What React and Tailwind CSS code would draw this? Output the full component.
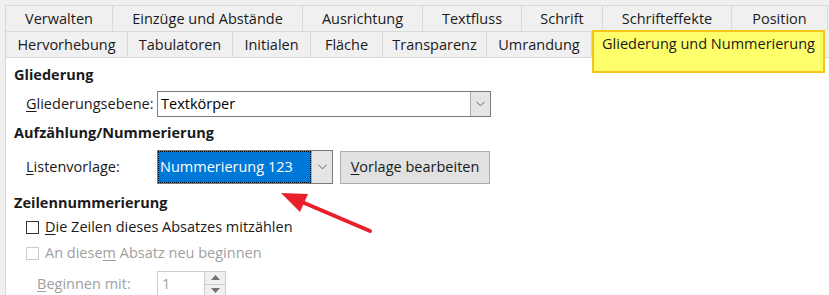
import React from 'react';

const topTabs = [
  { label: 'Verwalten', w: 'w-[108px]' },
  { label: 'Einzüge und Abstände', w: 'w-[190px]' },
  { label: 'Ausrichtung', w: 'w-[120px]' },
  { label: 'Textfluss', w: 'w-[99px]' },
  { label: 'Schrift', w: 'w-[81px]' },
  { label: 'Schrifteffekte', w: 'w-[129px]' },
  { label: 'Position', w: 'w-[96px]' },
];

const bottomTabs = [
  { label: 'Hervorhebung', w: 'w-[123px]' },
  { label: 'Tabulatoren', w: 'w-[105px]' },
  { label: 'Initialen', w: 'w-[78px]' },
  { label: 'Fläche', w: 'w-[72px]' },
  { label: 'Transparenz', w: 'w-[104px]' },
  { label: 'Umrandung', w: 'w-[105px]' },
];

const Chevron = () => (
  <svg width="9" height="6" viewBox="0 0 9 6" fill="none">
    <path d="M0.5 0.8 L4.5 4.8 L8.5 0.8" stroke="#606060" strokeWidth="1" />
  </svg>
);

const Tri = ({ up }) => (
  <svg width="9" height="5" viewBox="0 0 9 5">
    <polygon points={up ? '0,5 9,5 4.5,0' : '0,0 9,0 4.5,5'} fill="#707070" />
  </svg>
);

const Tab = ({ label, w, first }) => (
  <div
    className={`${w} h-full flex items-center justify-center border-t border-r border-[#d9d9d9] ${first ? 'border-l' : ''}`}
  >
    {label}
  </div>
);

const Heading = ({ children, className = '' }) => (
  <div className={`h-[20px] flex items-center font-bold ${className}`}>{children}</div>
);

export default function App() {
  return (
    <div className="relative w-[829px] h-[295px] overflow-hidden bg-[#f0f0f0] text-[14.5px] text-[#1a1a1a] font-['Open_Sans','Noto_Sans',sans-serif]">
      <div className="pt-[5px] pl-[5px]">
        <div className="flex h-[26px]">
          {topTabs.map((t, i) => (
            <Tab key={t.label} {...t} first={i === 0} />
          ))}
        </div>
        <div className="flex h-[26px]">
          {bottomTabs.map((t, i) => (
            <Tab key={t.label} {...t} first={i === 0} />
          ))}
          <div className="relative w-[233px] h-full">
            <div className="absolute left-0 top-[-1px] w-[233px] h-[43px] bg-[#ffff6b] border-2 border-[#f4c81a] flex justify-center pt-[1px] z-10">
              Gliederung und Nummerierung
            </div>
          </div>
        </div>

        {/* panel */}
        <div className="h-[240px] bg-white border-l border-t border-[#d9d9d9] pl-[8px] pt-[7px]">
          <Heading>Gliederung</Heading>

          <div className="flex items-center ml-[12px] mt-[6px] h-[26px]">
            <span className="w-[131px]">
              <u className="underline-offset-2">G</u>liederungsebene:
            </span>
            <div className="flex w-[334px] h-[26px] border border-[#7a7a7a] bg-white">
              <div className="flex-1 flex items-center pl-[3px] text-black">Textkörper</div>
              <div className="w-[20px] bg-[#e5e5e5] border-l border-[#adadad] flex items-center justify-center">
                <Chevron />
              </div>
            </div>
          </div>

          <Heading className="mt-[6px]">Aufzählung/Nummerierung</Heading>

          <div className="flex items-center ml-[12px] mt-[7px] h-[34px]">
            <span className="w-[131px]">
              <u className="underline-offset-2">L</u>istenvorlage:
            </span>
            <div className="flex w-[176px] h-[34px] border border-[#7a7a7a] bg-white">
              <div className="flex-1 flex items-center pl-[2px] bg-[#0078d7] text-white outline-1 outline-dotted outline-black -outline-offset-1">
                Nummerierung 123
              </div>
              <div className="w-[21px] bg-[#e5e5e5] border-l border-[#adadad] flex items-center justify-center">
                <Chevron />
              </div>
            </div>
            <button className="ml-[7px] w-[150px] h-[33px] bg-[#e1e1e1] border border-[#adadad] text-[#1a1a1a]">
              <u className="underline-offset-2">V</u>orlage bearbeiten
            </button>
          </div>

          <Heading className="mt-[9px]">Zeilennummerierung</Heading>

          <div className="flex items-center ml-[12px] mt-[4px] h-[20px]">
            <span className="w-[13px] h-[13px] border border-[#333] bg-white mr-[6px]" />
            <span>
              <u className="underline-offset-2">D</u>ie Zeilen dieses Absatzes mitzählen
            </span>
          </div>

          <div className="flex items-center ml-[12px] mt-[6px] h-[20px] text-[#a0a0a0]">
            <span className="w-[13px] h-[13px] border border-[#cccccc] bg-white mr-[6px]" />
            <span>
              An diese<u className="underline-offset-2">m</u> Absatz neu beginnen
            </span>
          </div>

          <div className="flex items-start ml-[12px] mt-[8px] text-[#a0a0a0]">
            <span className="w-[131px] pl-[11px] pt-[2px]">
              <u className="underline-offset-2">B</u>eginnen mit:
            </span>
            <div className="flex w-[69px] h-[26px] border border-[#cccccc] bg-white">
              <div className="flex-1 flex items-center pl-[4px]">1</div>
              <div className="w-[21px] flex flex-col border-l border-[#cccccc]">
                <div className="flex-1 bg-[#f0f0f0] border-b border-[#cccccc] flex items-center justify-center">
                  <Tri up />
                </div>
                <div className="flex-1 bg-[#f0f0f0] flex items-center justify-center">
                  <Tri />
                </div>
              </div>
            </div>
          </div>
        </div>
      </div>

      {/* red annotation arrow */}
      <svg className="absolute left-0 top-0 pointer-events-none" width="829" height="295">
        <line x1="370" y1="231" x2="295" y2="199" stroke="#e8202a" strokeWidth="4" strokeLinecap="round" />
        <polygon points="281,193 308,194 300,212" fill="#e8202a" />
      </svg>
    </div>
  );
}
